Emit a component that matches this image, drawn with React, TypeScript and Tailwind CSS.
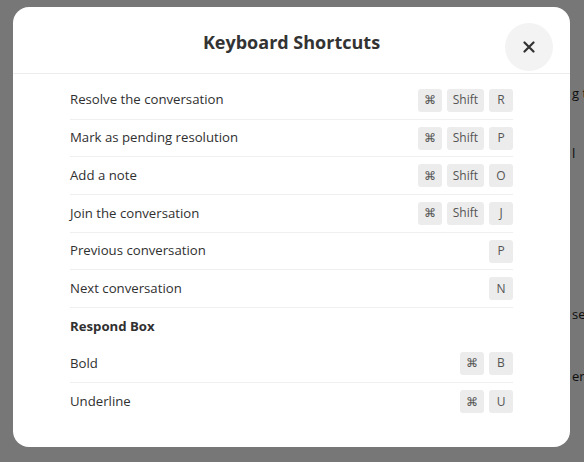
import type { ReactElement } from "react"

type Shortcut = { label: string; keys: string[] }

const general: Shortcut[] = [
  { label: "Resolve the conversation", keys: ["⌘", "Shift", "R"] },
  { label: "Mark as pending resolution", keys: ["⌘", "Shift", "P"] },
  { label: "Add a note", keys: ["⌘", "Shift", "O"] },
  { label: "Join the conversation", keys: ["⌘", "Shift", "J"] },
  { label: "Previous conversation", keys: ["P"] },
  { label: "Next conversation", keys: ["N"] },
]

const respondBox: Shortcut[] = [
  { label: "Bold", keys: ["⌘", "B"] },
  { label: "Underline", keys: ["⌘", "U"] },
]

function Key({ k }: { k: string }): ReactElement {
  return (
    <span className="h-[23px] min-w-[24px] px-[6px] flex items-center justify-center rounded-[3px] bg-[#ececec] text-[12px] text-[#555]">
      {k}
    </span>
  )
}

function Row({ s, last }: { s: Shortcut; last?: boolean }): ReactElement {
  return (
    <div className={"h-[37.7px] flex items-center justify-between" + (last ? "" : " border-b border-[#efefef]")}>
      <span className="text-[13.2px] text-[#303030]">{s.label}</span>
      <div className="flex gap-[5px]">
        {s.keys.map((k) => (
          <Key key={k} k={k} />
        ))}
      </div>
    </div>
  )
}

export default function App(): ReactElement {
  return (
    <div className="relative w-[584px] h-[462px] overflow-hidden bg-white" style={{ fontFamily: '"Open Sans", "Noto Sans", sans-serif' }}>
      {/* page behind the overlay */}
      <div className="flex flex-col whitespace-nowrap text-[13px] text-[#222] pl-[572px]">
        <span className="mt-[84px]">g t</span>
        <span className="mt-[40px]">l</span>
        <span className="mt-[142px]">se</span>
        <span className="mt-[42px]">er</span>
      </div>

      <div className="absolute inset-0 bg-[rgba(0,0,0,0.535)] pt-[7px] pl-[13px]">
        <div className="w-[557px] h-[440px] bg-white rounded-[16px] flex flex-col">
          <div className="relative h-[67px] border-b border-[#ececec] flex items-center justify-center">
            <h2 className="text-[18px] font-bold text-[#333] mt-[5px]">Keyboard Shortcuts</h2>
            <button className="absolute right-[17px] top-[16px] w-[48px] h-[48px] rounded-full bg-[#f3f3f3] flex items-center justify-center text-[#333]">
              <svg width="12" height="12" viewBox="0 0 12 12" fill="none" stroke="currentColor" strokeWidth="2.2" strokeLinecap="round">
                <path d="M1.5 1.5l9 9M10.5 1.5l-9 9" />
              </svg>
            </button>
          </div>
          <div className="px-[57px] pt-[8px] flex flex-col">
            {general.map((s) => (
              <Row key={s.label} s={s} />
            ))}
            <div className="h-[37px] pt-[1px] flex items-center text-[13.2px] font-bold text-[#303030]">Respond Box</div>
            {respondBox.map((s, i) => (
              <Row key={s.label} s={s} last={i === respondBox.length - 1} />
            ))}
          </div>
        </div>
      </div>
    </div>
  )
}
